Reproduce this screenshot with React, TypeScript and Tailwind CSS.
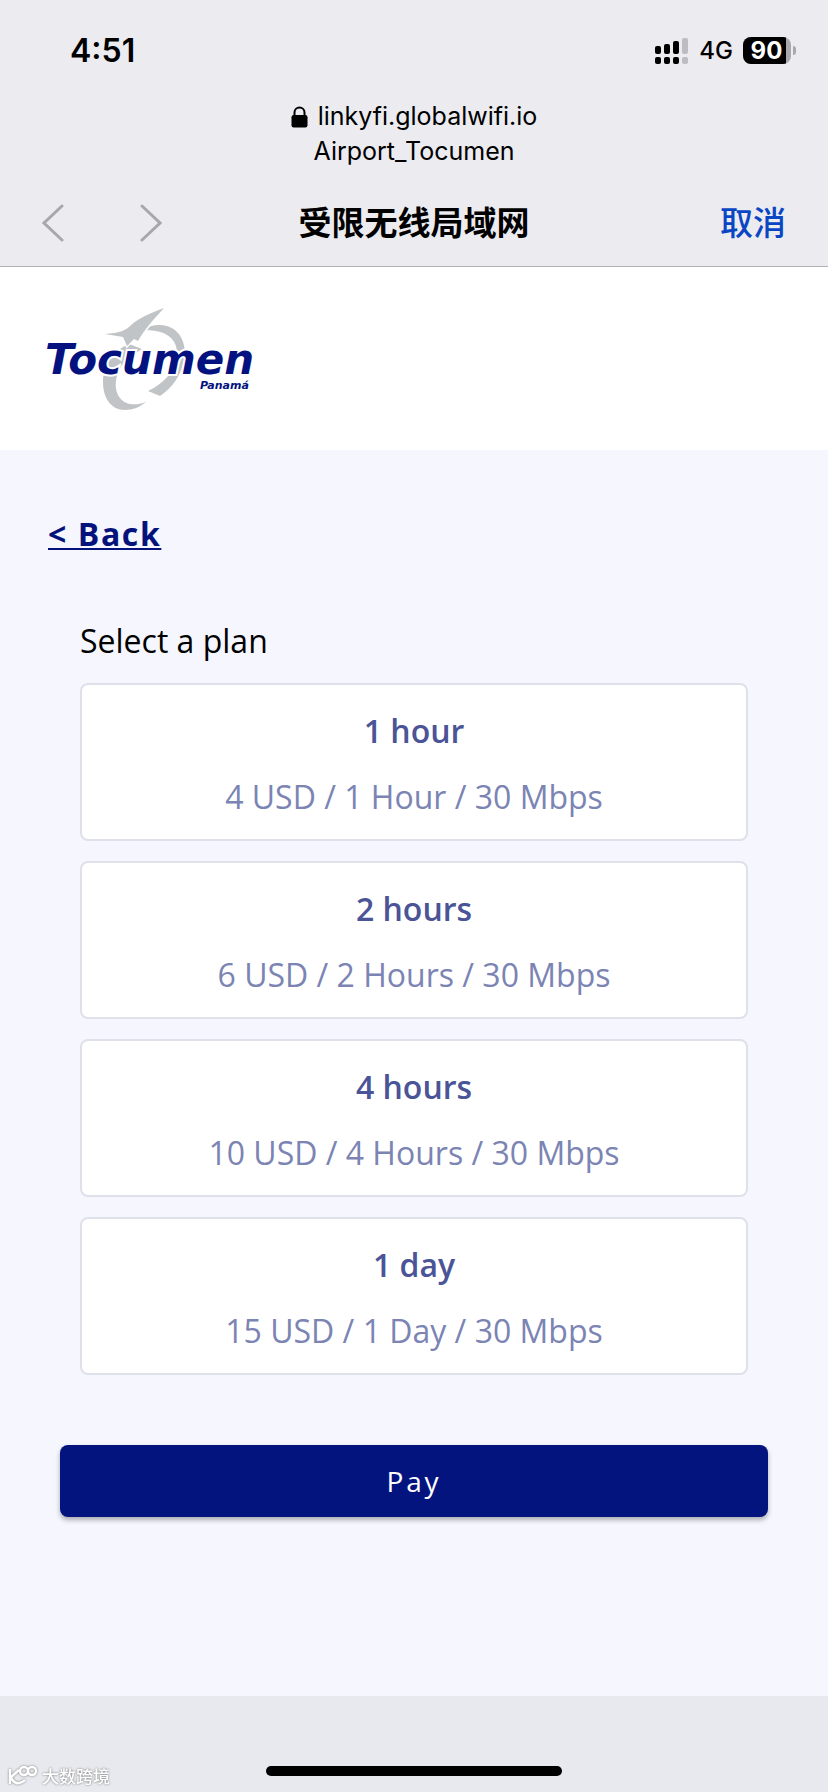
import { useState } from "react"

interface Plan {
  id: string
  name: string
  details: string
}

const plans: Plan[] = [
  { id: "1h", name: "1 hour", details: "4 USD / 1 Hour / 30 Mbps" },
  { id: "2h", name: "2 hours", details: "6 USD / 2 Hours / 30 Mbps" },
  { id: "4h", name: "4 hours", details: "10 USD / 4 Hours / 30 Mbps" },
  { id: "1d", name: "1 day", details: "15 USD / 1 Day / 30 Mbps" },
]

function SignalIcon() {
  return (
    <svg width="34" height="28" viewBox="0 0 34 28" aria-hidden="true">
      <rect x="0" y="9" width="6" height="8" rx="2" />
      <rect x="9" y="7" width="6" height="10" rx="2" />
      <rect x="18" y="4" width="6" height="13" rx="2" />
      <rect x="27" y="1" width="6" height="16" rx="2" fill="#bdbdc1" />
      <rect x="0" y="20" width="6" height="7" rx="2" />
      <rect x="9" y="20" width="6" height="7" rx="2" />
      <rect x="18" y="20" width="6" height="7" rx="2" />
      <rect x="27" y="20" width="6" height="7" rx="2" fill="#bdbdc1" />
    </svg>
  )
}

function Battery() {
  return (
    <div className="flex items-center gap-[2px]">
      <div className="flex h-[27px] w-12 overflow-hidden rounded-lg bg-[#a9a9ad]">
        <span className="flex w-[43px] items-center justify-center bg-black pl-1 text-2xl font-bold text-white">90</span>
      </div>
      <span className="h-[9px] w-[3px] rounded-r-full bg-[#a9a9ad]" />
    </div>
  )
}

function LockIcon() {
  return (
    <svg width="17" height="22" viewBox="0 0 17 22" aria-hidden="true">
      <path d="M3.5 10V6.5a5 5 0 0 1 10 0V10" fill="none" stroke="#000" strokeWidth="2" />
      <rect x="0.5" y="9" width="16" height="12.5" rx="2.2" />
    </svg>
  )
}

function TocumenLogo() {
  return (
    <svg width="214" height="108" viewBox="0 0 214 108" role="img" aria-label="Tocumen Panamá">
      <g fill="#c1c4c6">
        {/* right arc */}
        <path d="M97 23C105 18 114 17 122 19C136 23 142 38 139 53C136 69 127 81 115 89L103 84C118 77 128 66 131 53C135 37 127 22 97 23Z" />
        {/* left arc */}
        <path d="M84 37C69 43 58 58 58 75C58 91 66 103 80 103C88 103 95 100 101 95C91 99 80 98 75 91C67 81 71 62 82 52L97 42Z" />
        {/* bird */}
        <path
          d="M119 1C108 13 99 23 93 34L89 32L82 39L78 30L60 27C71 26 78 25 84 20C91 13 100 8 119 1Z"
          stroke="#fff"
          strokeWidth="3"
          paintOrder="stroke"
        />
      </g>
      <g fontFamily="'DejaVu Sans', sans-serif" fontWeight="700" fontStyle="italic" fill="#03127f">
        <text x="0" y="67" fontSize="42" stroke="#fff" strokeWidth="4" paintOrder="stroke">
          Tocumen
        </text>
        <text x="155" y="82" fontSize="11">
          Panamá
        </text>
      </g>
    </svg>
  )
}

function Chevron({ direction }: { direction: "left" | "right" }) {
  return (
    <svg width="22" height="38" viewBox="0 0 22 38" fill="none" stroke="#a8a8ac" strokeWidth="3" strokeLinecap="round" aria-hidden="true">
      <path d={direction === "left" ? "M20 2L2 19L20 36" : "M2 2L20 19L2 36"} />
    </svg>
  )
}

function BrowserHeader() {
  return (
    <header className="border-b border-[#b2b2b6] bg-[#ebebf0] font-['Inter','Noto_Sans_CJK_SC',sans-serif] text-black">
      <div className="flex h-[98px] items-center justify-between pt-[3px] pr-8 pl-[70px]">
        <span className="text-[32px] leading-10 font-semibold">4:51</span>
        <div className="flex items-center gap-[10px]">
          <SignalIcon />
          <span className="text-2xl font-medium">4G</span>
          <Battery />
        </div>
      </div>

      <div className="flex flex-col items-center pt-px text-[25px] leading-[35px]">
        <div className="flex items-center gap-[10px]">
          <LockIcon />
          <span>linkyfi.globalwifi.io</span>
        </div>
        <span>Airport_Tocumen</span>
      </div>

      <div className="grid h-[97px] grid-cols-[1fr_auto_1fr] items-center px-[42px] pt-[10px]">
        <div className="flex gap-[76px]">
          <button type="button" aria-label="Previous page">
            <Chevron direction="left" />
          </button>
          <button type="button" aria-label="Next page">
            <Chevron direction="right" />
          </button>
        </div>
        <h1 className="text-[33px] leading-10 font-semibold">受限无线局域网</h1>
        <button type="button" className="justify-self-end text-[33px] leading-10 font-medium text-[#0a46c4]">
          取消
        </button>
      </div>
    </header>
  )
}

function Watermark() {
  return (
    <div className="absolute bottom-1 left-2 flex items-center gap-1 font-['Noto_Sans_CJK_SC',sans-serif] text-[17px] leading-6 font-medium text-white drop-shadow-[0_0_1px_#777]">
      <svg width="30" height="22" viewBox="0 0 30 22" fill="none" stroke="#fff" strokeWidth="2.4" aria-hidden="true">
        <path d="M2 4v15M11 5L3 12c2 6 8 9 14 3" />
        <circle cx="16" cy="6" r="4" />
        <circle cx="24" cy="6" r="4" />
      </svg>
      <span>大数跨境</span>
    </div>
  )
}

function App() {
  const [selected, setSelected] = useState<string | null>(null)

  return (
    <div className="flex min-h-screen flex-col bg-[#f5f6fe] font-['Open_Sans','Noto_Sans',sans-serif]">
      <BrowserHeader />

      <div className="bg-white px-[45px] pt-10 pb-[35px]">
        <TocumenLogo />
      </div>

      <main className="flex-1 px-12 pt-[60px]">
        <a href="#back" className="inline-block text-[32px] leading-12 font-bold tracking-wider text-[#04137c] underline decoration-2 underline-offset-2">
          &lt; Back
        </a>

        <section className="mt-[59px] px-8">
          <h2 className="text-[32px] leading-12 text-black">Select a plan</h2>
          <div className="mt-[18px] flex flex-col gap-5">
            {plans.map((plan) => (
              <button
                key={plan.id}
                type="button"
                aria-pressed={selected === plan.id}
                onClick={() => setSelected(plan.id)}
                className="flex h-[158px] flex-col items-center justify-center gap-[18px] rounded-lg border-2 border-[#dfe1ea] bg-white pt-1 text-[32px] leading-12"
              >
                <span className="font-semibold text-[#4a5496]">{plan.name}</span>
                <span className="text-[#7b84b3]">{plan.details}</span>
              </button>
            ))}
          </div>
        </section>

        <div className="mt-[70px] px-3">
          <button
            type="button"
            className="h-[72px] w-full rounded-lg bg-[#04147f] text-[28px] tracking-widest text-white shadow-[0_3px_5px_rgba(0,0,0,0.3)]"
          >
            Pay
          </button>
        </div>
      </main>

      <footer className="relative flex h-24 items-end justify-center bg-[#e8e9ee] pb-4">
        <span className="h-[10px] w-[296px] rounded-full bg-black" />
        <Watermark />
      </footer>
    </div>
  )
}

export default App
